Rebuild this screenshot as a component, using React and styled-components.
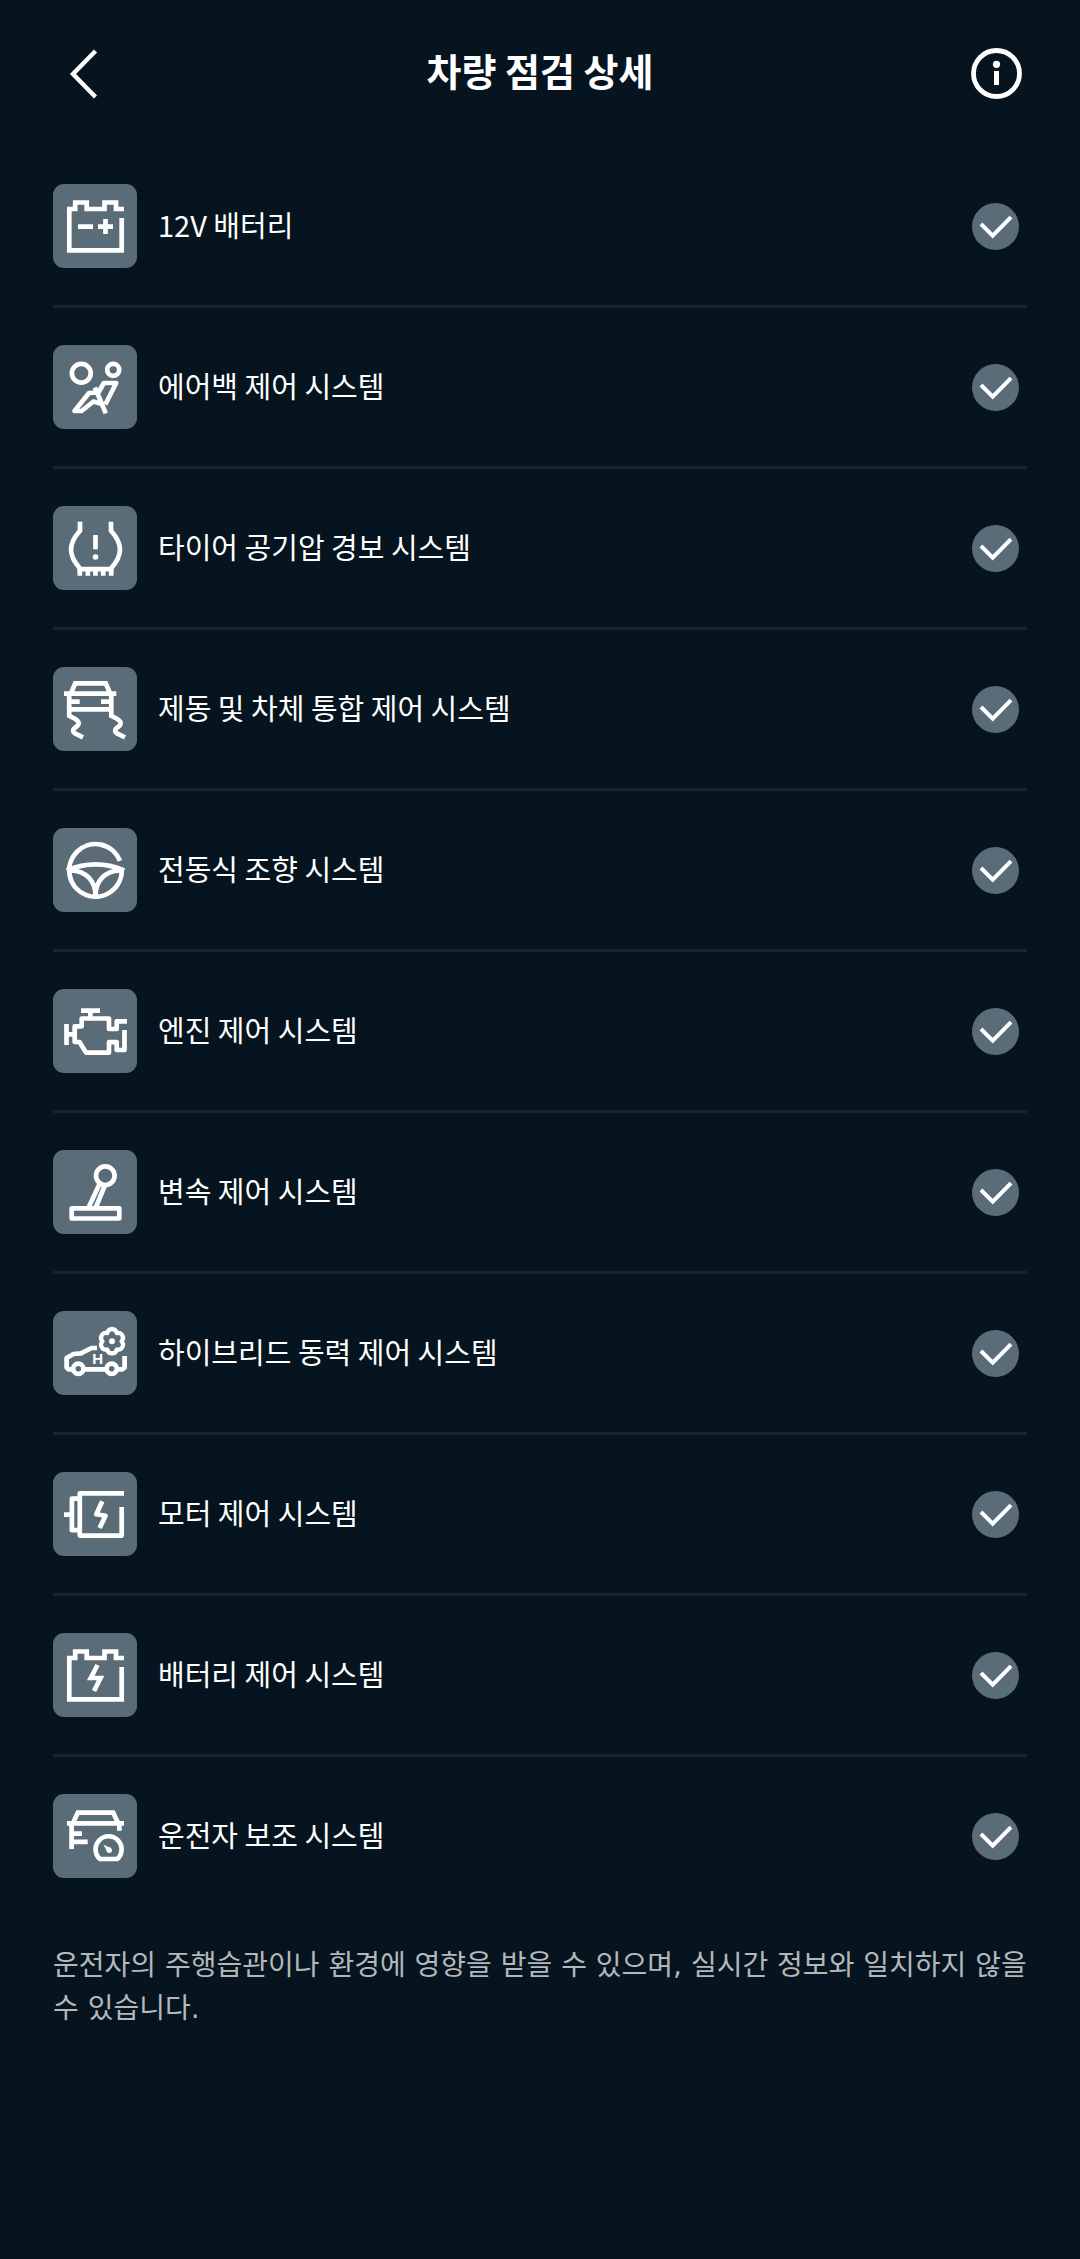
import React from 'react';
import styled, { createGlobalStyle } from 'styled-components';

const colors = {
  background: '#05141e',
  tile: '#5b6c79',
  divider: '#18252f',
  text: '#ffffff',
  muted: '#b4b8bb',
};

const GlobalStyle = createGlobalStyle`
  * {
    box-sizing: border-box;
  }

  body {
    margin: 0;
    background: ${colors.background};
    color: ${colors.text};
    font-family: 'Noto Sans CJK KR', 'Noto Sans', sans-serif;
  }
`;

const Page = styled.div`
  min-height: 100vh;
  background: ${colors.background};
`;

const Header = styled.header`
  display: grid;
  grid-template-columns: 60px 1fr 60px;
  align-items: center;
  height: 147px;
  padding: 0 53px;
`;

const Title = styled.h1`
  margin: 0;
  padding-bottom: 8px;
  font-size: 38px;
  font-weight: 700;
  line-height: 56px;
  text-align: center;
`;

const IconButton = styled.button`
  display: flex;
  align-items: center;
  justify-content: ${({ $end }) => ($end ? 'flex-end' : 'flex-start')};
  height: 60px;
  padding: ${({ $end }) => ($end ? '0 5px 0 0' : '0 0 0 16px')};
  border: 0;
  background: none;
  color: inherit;
  cursor: pointer;
`;

const List = styled.ul`
  margin: 0;
  padding: 0 53px;
  list-style: none;
`;

const Row = styled.li`
  display: flex;
  align-items: center;
  gap: 21px;
  height: 161px;
  padding-right: 8px;
  border-bottom: 3px solid ${colors.divider};

  &:last-child {
    border-bottom-color: transparent;
  }
`;

const Tile = styled.span`
  flex: none;
  display: block;
  width: 84px;
  height: 84px;
  border-radius: 11px;
  background: ${colors.tile};
`;

const Label = styled.span`
  flex: 1;
  padding-bottom: 4px;
  font-size: 29px;
  line-height: 42px;
`;

const Footnote = styled.p`
  margin: 0;
  padding: 26px 48px 0 53px;
  color: ${colors.muted};
  font-family: 'DejaVu Sans', 'Noto Sans CJK KR', sans-serif;
  font-size: 28px;
  line-height: 43px;
  word-break: keep-all;
`;

const TileSvg = styled.svg`
  display: block;
  width: 100%;
  height: 100%;
  fill: none;
  stroke: #fff;
  stroke-width: 4.7;
`;

const TileIcon = ({ children, round }) => (
  <TileSvg viewBox="0 0 84 84" strokeLinejoin={round ? 'round' : 'miter'} aria-hidden="true">
    {children}
  </TileSvg>
);

const batteryCase = 'M71 25H63V18.5H51.5V25H33.7V18.5H22.2V25H16.3V66.3H68.7V34';

const BatteryIcon = () => (
  <TileIcon>
    <path d={batteryCase} />
    <path d="M25 42.7H40M45 42.7H60M52.5 35V50" />
  </TileIcon>
);

const AirbagIcon = () => (
  <TileIcon round>
    <circle cx="28.3" cy="28.3" r="9.4" />
    <circle cx="60.2" cy="24.8" r="6" />
    <path d="M45.5 47.5L50.8 38H63.2L52.3 59.5" />
    <path d="M41.8 42.5L44.3 48L48.5 58L52.8 68.3" />
    <path d="M44.3 47.5L36 48L21.5 66H28.5L40.5 56.5L49 59" />
  </TileIcon>
);

const TireIcon = () => (
  <TileIcon>
    <path d="M27 15.7V24.7C15 38 15 49 27 62.5" />
    <path d="M58 15.7V24.7C70 38 70 49 58 62.5" />
    <path d="M24.5 63.2H60.5" />
    <path d="M26.8 62V69.7M34.8 62V69.7M42.5 62V69.7M50.2 62V69.7M58.2 62V69.7" />
    <path d="M42.5 29V43.3" />
    <circle cx="42.5" cy="51" r="2.8" fill="#fff" stroke="none" />
  </TileIcon>
);

const SkidIcon = () => (
  <TileIcon>
    <path d="M18.3 25.5L22.2 16.3H52.8L56.7 25.5" />
    <path d="M11 26.7H63.3" />
    <path d="M16.2 26.7V48.8L21.5 51.5C27 54.5 26.5 57.5 23 60C19 62.8 19.5 65 23 67L30 70.3" />
    <path d="M58.3 26.7V48.8L63.5 51.5C69 54.5 68.5 57.5 65 60C61 62.8 61.5 65 65 67L72 70.3" />
    <path d="M17 34.7H26.7M48 34.7H57M16.2 42.3H58.3" />
  </TileIcon>
);

const SteeringIcon = () => (
  <TileIcon>
    <path d="M67 32.8A26.3 26.3 0 1 0 68.8 41.5" />
    <path d="M13.8 42.3Q42.5 30.3 71.2 42.3" />
    <path d="M18 42.3C33 42.8 42.5 53 42.5 68C42.5 53 52 42.8 67 42.3" />
  </TileIcon>
);

const EngineIcon = () => (
  <TileIcon round>
    <path d="M13.5 35V56M13.5 45.4H21.7" />
    <path d="M28 21.7H47M37.4 21.7V29.5" />
    <path d="M74 32.3H63.7V40H56V29.5H28.7V37.3H21.7V53H26.5L33 63.6H56V53.2H63.7V61H71.5V41" />
  </TileIcon>
);

const ShifterIcon = () => (
  <TileIcon round>
    <circle cx="52.3" cy="25.7" r="9.3" />
    <path d="M46.5 34L35.6 57.5M51.6 36L42.8 57.5" />
    <path d="M18.7 58.3H66.3V68.5H18.7Z" />
  </TileIcon>
);

const HybridIcon = () => (
  <TileIcon round>
    <path d="M44 37H38.5L28 42.3L20.5 43L13.6 47V56.5L15.5 58.3H21" />
    <path d="M30 58.3H54M62 58.3H69.5L71.6 56.5V45" />
    <circle cx="25.3" cy="57.7" r="5.1" />
    <circle cx="58.7" cy="57.7" r="5.1" />
    <path
      d="M54.2 22.1A4.9 4.9 0 0 1 63.8 22.1A4.9 4.9 0 0 1 68.5 30.3A4.9 4.9 0 0 1 63.8 38.5A4.9 4.9 0 0 1 54.2 38.5A4.9 4.9 0 0 1 49.5 30.3A4.9 4.9 0 0 1 54.2 22.1Z"
      strokeWidth="4.2"
    />
    <circle cx="59" cy="30.3" r="3" fill="#fff" stroke="none" />
    <text
      x="44.7"
      y="53"
      textAnchor="middle"
      fontFamily="Liberation Sans, sans-serif"
      fontSize="15"
      fontWeight="700"
      fill="#fff"
      stroke="none"
    >
      H
    </text>
  </TileIcon>
);

const MotorIcon = () => (
  <TileIcon round>
    <path d="M71 21.4H26.8V63.6H68.7V35" />
    <path d="M26.8 26.6H18.9V58.2H26.8" />
    <path d="M11 42.6H18" />
    <path d="M49.3 29.2L43.3 42.3L52.5 43.7L46.6 56" />
  </TileIcon>
);

const BatteryControlIcon = () => (
  <TileIcon>
    <path d={batteryCase} />
    <path d="M44.5 32L37.8 45H47.5L41 58" />
  </TileIcon>
);

const DriverAssistIcon = () => (
  <TileIcon>
    <path d="M20.3 28.5L24.8 18.7H60.2L64.8 28.5" />
    <path d="M14 29.4H71M66.3 29.4V36.8" />
    <path d="M18.6 29.4V55M18.6 39.6H29M18.6 47.8H34.7" />
    <path d="M47 65A13 13 0 1 1 64.2 65Z" />
    <path d="M50.5 50.8L58 54L54.5 58Z" fill="#fff" stroke="none" />
    <circle cx="56.2" cy="56.2" r="2.7" fill="#fff" stroke="none" />
  </TileIcon>
);

const BackIcon = () => (
  <svg width="30" height="50" viewBox="0 0 30 50" fill="none" aria-hidden="true">
    <path d="M26.5 2L4 25L26.5 48" stroke="#fff" strokeWidth="4.4" />
  </svg>
);

const InfoIcon = () => (
  <svg width="51" height="51" viewBox="0 0 51 51" fill="none" aria-hidden="true">
    <circle cx="25.5" cy="25.5" r="23" stroke="#fff" strokeWidth="4.8" />
    <circle cx="25.5" cy="16.3" r="3.6" fill="#fff" />
    <path d="M25.5 23V37" stroke="#fff" strokeWidth="5" />
  </svg>
);

const CheckIcon = () => (
  <svg width="47" height="47" viewBox="0 0 47 47" fill="none" role="img" aria-label="정상">
    <circle cx="23.5" cy="23.5" r="23.5" fill={colors.tile} />
    <path d="M9 21L20.7 32.7L39 14.2" stroke="#fff" strokeWidth="4" />
  </svg>
);

const systems = [
  { name: '12V 배터리', Icon: BatteryIcon },
  { name: '에어백 제어 시스템', Icon: AirbagIcon },
  { name: '타이어 공기압 경보 시스템', Icon: TireIcon },
  { name: '제동 및 차체 통합 제어 시스템', Icon: SkidIcon },
  { name: '전동식 조향 시스템', Icon: SteeringIcon },
  { name: '엔진 제어 시스템', Icon: EngineIcon },
  { name: '변속 제어 시스템', Icon: ShifterIcon },
  { name: '하이브리드 동력 제어 시스템', Icon: HybridIcon },
  { name: '모터 제어 시스템', Icon: MotorIcon },
  { name: '배터리 제어 시스템', Icon: BatteryControlIcon },
  { name: '운전자 보조 시스템', Icon: DriverAssistIcon },
];

const App = () => (
  <>
    <GlobalStyle />
    <Page>
      <Header>
        <IconButton type="button" aria-label="뒤로">
          <BackIcon />
        </IconButton>
        <Title>차량 점검 상세</Title>
        <IconButton type="button" aria-label="정보" $end>
          <InfoIcon />
        </IconButton>
      </Header>

      <main>
        <List>
          {systems.map(({ name, Icon }) => (
            <Row key={name}>
              <Tile>
                <Icon />
              </Tile>
              <Label>{name}</Label>
              <CheckIcon />
            </Row>
          ))}
        </List>

        <Footnote>
          운전자의 주행습관이나 환경에 영향을 받을 수 있으며, 실시간 정보와 일치하지 않을 수
          있습니다.
        </Footnote>
      </main>
    </Page>
  </>
);

export default App;
